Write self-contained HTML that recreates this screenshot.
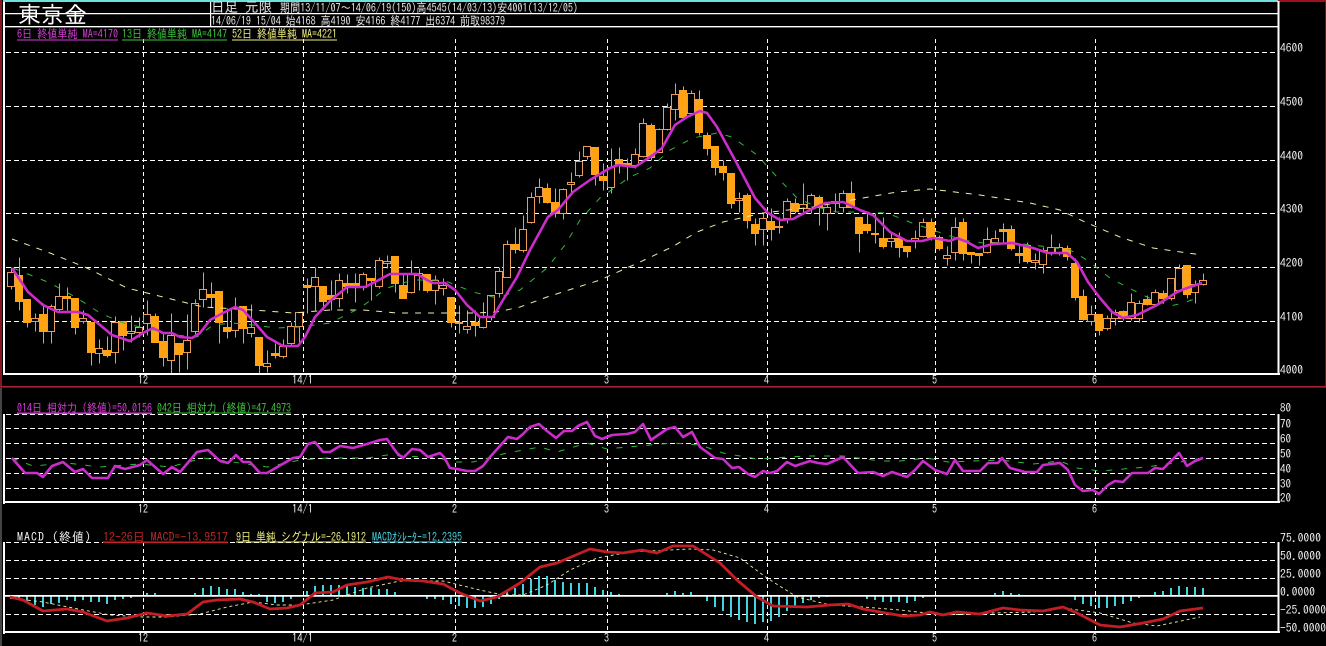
<!DOCTYPE html>
<html lang="ja"><head><meta charset="utf-8"><title>東京金</title>
<style>
html,body{margin:0;padding:0;background:#000;width:1326px;height:646px;overflow:hidden}
svg{display:block}
text{font-family:"IPAGothic","Noto Sans CJK JP",sans-serif;white-space:pre}
</style></head><body>
<svg width="1326" height="646" viewBox="0 0 1326 646" xmlns="http://www.w3.org/2000/svg">
<rect width="1326" height="646" fill="#000"/>
<!-- outer chrome -->
<path d="M0 0h2v386H0z" fill="#8a1420"/>
<path d="M0 388h2v258H0z" fill="#444"/>
<path d="M1325 0h1v386h-1z" fill="#7a1018"/>
<path d="M1278 0h48v2h-48z" fill="#a01018"/>
<path d="M3 0h1275v2H3z" fill="#6fe0e0"/>
<path d="M0 386h1326v1.6H0z" fill="#a82030"/>

<!-- grid main -->
<g fill="none" stroke="#fff" stroke-width="1" transform="translate(0,.5)">
<path stroke-dasharray="5 3" d="M6 52H1277M6 106H1277M6 160H1277M6 213H1277M6 267H1277M6 321H1277"/>
<path stroke-dasharray="5 3" d="M6 414H1277M6 428H1277M6 443H1277M6 458H1277M6 473H1277M6 488H1277"/>
<path stroke-dasharray="5 3" d="M6 542H1277M6 560H1277M6 578H1277M6 614H1277"/>
</g>
<g fill="none" stroke="#fff" stroke-width="1" stroke-dasharray="4 3" transform="translate(.5,0)">
<path d="M143 39V373M303 39V373M455 39V373M607 39V373M767 39V373M935 39V373M1095 39V373"/>
<path d="M143 414V501M303 414V501M455 414V501M607 414V501M767 414V501M935 414V501M1095 414V501"/>
<path d="M143 542V631M303 542V631M455 542V631M607 542V631M767 542V631M935 542V631M1095 542V631"/>
</g>

<!-- candles -->
<g transform="translate(.5,.5)">
<path fill="none" stroke="#e89c58" stroke-width="1" d="M11 267V289M35 313V331M51 304V343M59 283V312M83 310V323M99 339V363M115 316V363M131 315V342M139 317V337M147 300V335M171 313V374M187 314V369M195 299V335M203 272V307M235 297V337M251 304V337M267 350V372M283 339V358M291 322V345M299 312V343M315 267V310M339 273V307M363 272V290M379 257V288M387 255V268M411 260V293M419 268V290M435 275V304M443 278V295M459 305V333M467 310V333M483 302V328M491 295V320M499 267V297M507 240V277M523 215V252M531 192V223M539 178V203M563 188V219M571 172V195M579 151V177M587 146V159M611 148V193M635 148V168M643 118V157M659 128V152M667 103V130M675 83V120M691 90V115M739 192V212M763 213V245M779 217V233M787 198V223M803 183V213M811 193V213M827 203V230M843 190V212M891 232V247M915 230V248M923 218V237M947 246V265M955 217V260M987 227V253M995 230V243M1035 253V269M1043 247V273M1051 234V255M1059 243V255M1091 305V325M1107 315V330M1115 309V325M1131 293V320M1139 300V322M1155 289V305M1171 278V300M1179 264V292M1195 280V303M1203 273V285M19 257V310M27 299V327M43 303V343M67 287V310M75 298V334M91 322V365M107 336V357M123 321V350M155 313V342M163 333V366M179 343V372M211 282V307M219 291V343M227 308V338M243 306V343M259 337V373M275 343V358M307 278V313M323 286V310M331 280V310M347 274V293M355 273V302M371 278V300M395 256V292M403 273V298M427 274V292M451 297V327M475 310V336M515 227V253M547 183V203M555 188V217M595 147V185M603 163V190M619 147V173M627 158V180M651 123V160M683 86V118M699 90V135M707 132V155M715 146V175M723 160V180M731 173V208M747 193V228M755 218V245M771 208V240M795 198V213M819 195V225M835 193V212M851 181V208M859 217V252M867 212V233M875 213V243M883 217V248M899 232V257M907 246V257M931 218V240M939 235V250M963 218V260M971 252V263M979 253V265M1003 223V243M1011 225V250M1019 243V263M1027 242V263M1067 245V260M1075 258V300M1083 289V320M1099 314V335M1123 310V320M1147 295V305M1163 290V303M1187 265V298"/>
<path fill="#000" stroke="#e89c58" stroke-width="1" d="M7 272h7v14h-7zM31 318h7v3h-7zM47 306h7v25h-7zM55 296h7v13h-7zM79 318h7v3h-7zM95 348h7v5h-7zM111 322h7v30h-7zM127 331h7v2h-7zM135 327h7v5h-7zM143 314h7v9h-7zM167 335h7v25h-7zM183 340h7v12h-7zM191 303h7v28h-7zM199 289h7v10h-7zM231 308h7v22h-7zM247 327h7v6h-7zM263 363h7v3h-7zM279 346h7v10h-7zM287 326h7v17h-7zM295 312h7v14h-7zM311 277h7v9h-7zM335 280h7v18h-7zM359 274h7v13h-7zM375 260h7v26h-7zM383 261h7v2h-7zM407 273h7v19h-7zM415 273h7v2h-7zM431 280h7v10h-7zM439 285h7v3h-7zM455 322h7v1h-7zM463 326h7v3h-7zM479 317h7v10h-7zM487 295h7v22h-7zM495 271h7v22h-7zM503 244h7v33h-7zM519 229h7v21h-7zM527 197h7v25h-7zM535 187h7v9h-7zM559 189h7v24h-7zM567 182h7v2h-7zM575 161h7v14h-7zM583 146h7v10h-7zM607 167h7v20h-7zM631 154h7v11h-7zM639 123h7v33h-7zM655 129h7v23h-7zM663 107h7v22h-7zM671 94h7v15h-7zM687 93h7v20h-7zM735 198h7v2h-7zM759 218h7v11h-7zM775 226h7v1h-7zM783 201h7v17h-7zM799 204h7v4h-7zM807 195h7v13h-7zM823 207h7v6h-7zM839 193h7v14h-7zM887 238h7v3h-7zM911 238h7v3h-7zM919 222h7v14h-7zM943 255h7v3h-7zM951 227h7v25h-7zM983 239h7v13h-7zM991 238h7v4h-7zM1031 260h7v2h-7zM1039 250h7v14h-7zM1047 247h7v6h-7zM1055 247h7v6h-7zM1087 314h7v7h-7zM1103 318h7v10h-7zM1111 312h7v6h-7zM1127 302h7v16h-7zM1135 303h7v15h-7zM1151 292h7v12h-7zM1167 278h7v20h-7zM1175 268h7v22h-7zM1191 284h7v8h-7zM1199 280h7v4h-7z"/>
<path fill="#ffa214" stroke="#ffa214" stroke-width="1" d="M15 275h7v26h-7zM23 299h7v23h-7zM39 314h7v17h-7zM63 296h7v2h-7zM71 298h7v29h-7zM87 322h7v30h-7zM103 350h7v5h-7zM119 321h7v14h-7zM151 316h7v26h-7zM159 341h7v16h-7zM175 343h7v11h-7zM207 294h7v3h-7zM215 291h7v31h-7zM223 327h7v4h-7zM239 306h7v22h-7zM255 337h7v28h-7zM271 353h7v2h-7zM303 285h7v2h-7zM319 286h7v15h-7zM327 295h7v4h-7zM343 283h7v3h-7zM351 283h7v4h-7zM367 278h7v2h-7zM391 256h7v27h-7zM399 285h7v13h-7zM423 274h7v16h-7zM447 297h7v25h-7zM471 322h7v3h-7zM511 244h7v5h-7zM543 188h7v14h-7zM551 202h7v11h-7zM591 147h7v27h-7zM599 176h7v4h-7zM615 159h7v6h-7zM623 163h7v2h-7zM647 125h7v32h-7zM679 90h7v27h-7zM695 99h7v33h-7zM703 135h7v13h-7zM711 146h7v21h-7zM719 166h7v6h-7zM727 173h7v30h-7zM743 195h7v25h-7zM751 224h7v9h-7zM767 221h7v8h-7zM791 203h7v8h-7zM815 197h7v10h-7zM831 201h7v2h-7zM847 193h7v14h-7zM855 217h7v16h-7zM863 224h7v6h-7zM871 233h7v1h-7zM879 238h7v8h-7zM895 238h7v9h-7zM903 246h7v5h-7zM927 222h7v15h-7zM935 237h7v11h-7zM959 222h7v31h-7zM967 252h7v2h-7zM975 253h7v2h-7zM999 229h7v2h-7zM1007 229h7v19h-7zM1015 253h7v2h-7zM1023 245h7v16h-7zM1063 248h7v8h-7zM1071 263h7v34h-7zM1079 296h7v23h-7zM1095 314h7v16h-7zM1119 311h7v7h-7zM1143 299h7v5h-7zM1159 293h7v5h-7zM1183 265h7v29h-7z"/>
</g>

<!-- moving averages -->
<polyline fill="none" stroke="#efefa8" stroke-width="1" stroke-dasharray="6 7" points="12,239 50,253 87,268 127,288 167,298 203,307 253,310 293,313 330,310 363,310 397,313 437,313 473,313 497,312 520,307 547,297 600,280 640,262 672,247 697,232 723,222 763,213 813,207 863,198 897,192 930,189 980,195 1030,203 1060,210 1085,222 1120,237 1153,248 1202,255"/>
<polyline fill="none" stroke="#2fb83a" stroke-width="1" stroke-dasharray="6 9" points="13,268 50,283 77,298 100,313 123,323 153,330 173,335 197,337 213,325 233,323 253,325 277,328 300,327 330,323 360,308 387,288 413,280 443,280 473,292 497,298 520,290 547,268 565,245 580,220 600,198 630,177 650,168 670,150 693,138 717,133 732,137 757,155 777,177 797,198 817,207 837,212 863,212 887,213 912,223 927,228 947,235 963,240 983,243 1010,242 1030,245 1050,247 1070,250 1087,260 1110,278 1127,287 1147,297 1170,306 1183,303 1200,297"/>
<polyline fill="none" stroke="#cc2ccc" stroke-width="2.6" stroke-linejoin="round" points="12,268 20,280 28,292 43,305 58,312 78,312 88,315 100,325 112,335 130,341 143,333 153,328 163,333 172,333 180,337 192,338 200,333 210,320 223,313 235,307 243,310 255,323 267,337 283,346 298,346 305,337 315,317 330,301 347,287 365,287 375,282 390,274 417,274 427,280 433,283 445,283 455,290 467,305 480,317 493,317 503,300 517,277 530,250 548,217 558,210 573,192 590,180 610,168 618,165 635,167 653,155 662,148 675,125 687,117 700,111 707,113 717,127 735,160 755,198 768,213 780,220 793,219 810,210 825,203 843,202 860,210 873,215 890,232 907,241 922,241 933,238 950,241 957,238 967,242 978,248 993,244 1013,243 1033,248 1048,253 1067,253 1077,262 1088,282 1100,298 1112,312 1123,318 1137,315 1157,305 1177,292 1187,288 1202,283"/>

<!-- RSI -->
<polyline fill="none" stroke="#2fb83a" stroke-width="1" stroke-dasharray="6 9" points="12,458 33,466 67,463 100,467 140,464 170,467 203,458 233,462 267,467 300,460 327,458 367,458 387,455 440,458 450,462 473,462 507,453 540,447 557,452 587,443 607,449 627,447 673,443 700,445 723,453 757,459 807,456 843,456 880,461 900,461 927,458 948,462 1000,460 1033,464 1060,461 1077,468 1100,471 1147,467 1180,462 1203,458"/>
<polyline fill="none" stroke="#cc2ccc" stroke-width="2.6" stroke-linejoin="round" points="12,458 25,473 37,473 43,477 52,466 63,462 75,472 83,469 92,478 108,478 115,466 125,469 140,465 147,460 163,474 172,467 180,472 197,452 208,450 220,461 228,463 236,455 243,462 250,462 260,473 267,473 293,458 300,457 308,444 315,442 323,452 330,452 340,446 353,448 367,444 380,440 387,439 397,453 403,458 412,449 420,450 428,457 440,453 444,457 450,468 457,469 467,471 475,471 483,466 490,457 508,437 517,439 523,434 530,427 539,424 547,431 556,438 564,431 572,431 578,426 587,422 595,436 602,439 612,435 627,434 635,432 643,424 651,440 667,429 675,427 683,437 692,432 700,447 715,458 723,459 732,468 739,467 748,474 755,477 763,471 770,473 777,471 787,462 795,466 810,461 818,463 827,464 843,457 858,473 873,472 883,476 892,472 907,477 915,470 923,461 935,470 947,474 955,460 963,471 980,471 988,463 998,463 1002,458 1010,468 1025,472 1037,472 1043,465 1060,463 1068,470 1075,485 1083,491 1093,490 1099,494 1108,485 1115,481 1123,482 1132,473 1148,473 1155,468 1163,469 1179,453 1187,466 1195,461 1203,458"/>

<!-- MACD histogram -->
<path fill="none" stroke="#3fd4e0" stroke-width="2" d="M11 595V599M19 595V599M27 596V602M35 596V605M43 596V607M51 596V604M59 596V603M67 595V600M75 596V601M83 596V600M91 596V602M99 596V602M107 596V604M115 596V600M123 596V599M131 596V598M147 593V596M155 593V596M163 595V596M171 595V596M187 595V596M195 593V596M203 588V596M211 586V596M219 587V596M227 589V596M235 589V596M243 592V596M251 594V596M259 594V596M267 596V602M275 596V603M283 596V602M291 596V599M307 591V596M315 586V596M323 585V596M331 585V596M339 585V596M347 586V596M355 587V596M363 588V596M371 588V596M379 589V596M387 589V596M395 592V596M427 595V599M435 595V599M443 596V600M451 596V604M459 596V606M467 596V608M475 596V608M483 596V607M491 596V604M499 594V599M507 592V596M515 588V596M523 584V596M531 579V596M539 576V596M547 576V596M555 580V596M563 582V596M571 583V596M579 583V596M587 583V596M595 587V596M603 590V596M611 592V596M619 594V596M635 595V596M643 595V596M651 595V596M667 593V596M675 591V596M683 593V596M691 592V596M707 596V601M715 596V607M723 596V611M731 596V617M739 596V620M747 596V622M755 596V624M763 596V622M771 596V621M779 596V617M787 596V611M795 596V607M803 596V603M811 596V600M819 596V598M827 596V597M843 595V596M851 595V596M859 595V596M867 596V599M875 596V600M883 596V602M891 596V602M899 596V602M907 596V603M915 596V601M923 596V598M947 595V596M955 595V596M963 595V596M979 595V596M987 595V596M995 593V596M1003 591V596M1011 593V596M1019 594V596M1027 595V596M1059 595V596M1067 595V596M1075 596V600M1083 596V604M1091 596V606M1099 596V608M1107 596V608M1115 596V606M1123 596V604M1131 596V601M1139 596V598M1147 595V596M1155 592V596M1163 591V596M1171 588V596M1179 586V596M1187 587V596M1195 587V596M1203 588V596"/>
<path d="M5 595h1273v1.8H5z" fill="#fff"/>
<polyline fill="none" stroke="#efefa8" stroke-width=".9" stroke-dasharray="3 3" points="10,598 43,602 73,608 110,615 143,617 167,617 200,614 227,607 253,602 277,605 300,605 333,600 367,588 400,581 443,581 480,590 503,595 523,595 547,585 570,570 597,558 630,552 690,549 713,550 740,558 767,578 797,597 830,605 863,607 900,610 927,613 943,615 993,613 1033,612 1063,608 1100,613 1133,623 1157,626 1200,617"/>
<polyline fill="none" stroke="#c41e24" stroke-width="2.8" stroke-linejoin="round" points="10,597 23,600 43,611 67,609 83,612 107,621 127,618 147,613 167,616 187,614 203,602 217,600 240,599 253,602 270,609 287,608 300,605 315,593 333,592 347,585 367,582 388,577 403,580 423,581 443,584 460,593 480,601 497,597 520,583 540,567 557,563 590,549 607,552 623,553 642,550 657,553 673,546 693,546 720,563 737,580 757,597 773,606 807,607 830,605 848,604 863,609 880,612 903,616 920,615 930,612 943,615 957,612 980,614 1003,608 1020,610 1043,611 1063,607 1077,613 1100,625 1120,627 1143,623 1163,619 1180,611 1203,608"/>

<!-- frames -->
<g fill="#fff">
<path d="M3 2h2v373H3zM5 373h1275v2H5zM1277.5 1h2v374h-2z"/>
<path d="M5 13h1273v1.2H5zM5 26h1273v1.4H5zM210 2h1.2v24H210z"/>
<path d="M3 414h2v90H3zM5 501h1275v2H5zM1277.5 414h2v89h-2z"/>
<path d="M3 542h2v92H3zM5 631h1275v2H5zM1277.5 542h2v91h-2z"/>
</g>

<!-- header -->
<text x="18" y="23" font-size="23" fill="#fff" textLength="69" lengthAdjust="spacing">東京金</text>
<text x="211" y="12" font-size="14" fill="#e8e8e8" textLength="61" lengthAdjust="spacingAndGlyphs">日足 元限</text>
<text x="280" y="12" font-size="12" fill="#e8e8e8" textLength="298" lengthAdjust="spacingAndGlyphs">期間13/11/07～14/06/19(150)高4545(14/03/13)安4001(13/12/05)</text>
<text x="211" y="25" font-size="12" fill="#e8e8e8" textLength="294" lengthAdjust="spacingAndGlyphs">14/06/19 15/04 始4168 高4190 安4166 終4177 出6374 前取98379</text>

<!-- main legend -->
<g font-size="12">
<text x="17" y="38" fill="#d83cd8" textLength="101" lengthAdjust="spacingAndGlyphs">6日 終値単純 MA=4170</text>
<text x="122" y="38" fill="#3cc43c" textLength="105" lengthAdjust="spacingAndGlyphs">13日 終値単純 MA=4147</text>
<text x="232" y="38" fill="#f0f080" textLength="105" lengthAdjust="spacingAndGlyphs">52日 終値単純 MA=4221</text>
<text x="17" y="412" fill="#d83cd8" textLength="135" lengthAdjust="spacingAndGlyphs">014日 相対力 (終値)=50.0156</text>
<text x="157" y="412" fill="#3cc43c" textLength="134" lengthAdjust="spacingAndGlyphs">042日 相対力 (終値)=47.4973</text>
<text x="17" y="541" fill="#eee" textLength="74" lengthAdjust="spacing">MACD (終値)</text>
<text x="103" y="541" fill="#c02428" textLength="125" lengthAdjust="spacing">12-26日 MACD=-13.9517</text>
<text x="236" y="541" fill="#f0f080" textLength="130" lengthAdjust="spacingAndGlyphs">9日 単純 シグナル=-26.1912</text>
<text x="372" y="541" fill="#45d0e0" textLength="90" lengthAdjust="spacingAndGlyphs">MACDｵｼﾚｰﾀｰ=12.2395</text>
</g>
<path d="M17 39.5h101v1H17z" fill="#d83cd8"/>
<path d="M122 39.5h105v1H122z" fill="#3cc43c"/>
<path d="M232 39.5h105v1H232z" fill="#f0f080"/>
<path d="M17 412.5h135v1.6H17z" fill="#d83cd8"/>
<path d="M157 412.5h134v1H157z" fill="#3cc43c"/>
<path d="M103 541.5h125v1.6H103z" fill="#c02428"/>
<path d="M236 541.5h130v1H236z" fill="#f0f080"/>
<path d="M372 541.5h90v1H372z" fill="#45d0e0"/>

<!-- y axis labels -->
<g font-size="12" fill="#f0f0f0">
<text x="1280" y="52" textLength="23" lengthAdjust="spacingAndGlyphs">4600</text>
<text x="1280" y="106" textLength="23" lengthAdjust="spacingAndGlyphs">4500</text>
<text x="1280" y="160" textLength="23" lengthAdjust="spacingAndGlyphs">4400</text>
<text x="1280" y="213" textLength="23" lengthAdjust="spacingAndGlyphs">4300</text>
<text x="1280" y="267" textLength="23" lengthAdjust="spacingAndGlyphs">4200</text>
<text x="1280" y="321" textLength="23" lengthAdjust="spacingAndGlyphs">4100</text>
<text x="1280" y="374" textLength="23" lengthAdjust="spacingAndGlyphs">4000</text>
<text x="1280" y="412" textLength="11" lengthAdjust="spacingAndGlyphs">80</text>
<text x="1280" y="428" textLength="11" lengthAdjust="spacingAndGlyphs">70</text>
<text x="1280" y="443" textLength="11" lengthAdjust="spacingAndGlyphs">60</text>
<text x="1280" y="458" textLength="11" lengthAdjust="spacingAndGlyphs">50</text>
<text x="1280" y="473" textLength="11" lengthAdjust="spacingAndGlyphs">40</text>
<text x="1280" y="488" textLength="11" lengthAdjust="spacingAndGlyphs">30</text>
<text x="1280" y="502" textLength="11" lengthAdjust="spacingAndGlyphs">20</text>
<text x="1280" y="542" textLength="41" lengthAdjust="spacingAndGlyphs">75.0000</text>
<text x="1280" y="560" textLength="41" lengthAdjust="spacingAndGlyphs">50.0000</text>
<text x="1280" y="578" textLength="41" lengthAdjust="spacingAndGlyphs">25.0000</text>
<text x="1280" y="596" textLength="35" lengthAdjust="spacingAndGlyphs">0.0000</text>
<text x="1280" y="614" textLength="46" lengthAdjust="spacingAndGlyphs">-25.0000</text>
<text x="1280" y="632" textLength="46" lengthAdjust="spacingAndGlyphs">-50.0000</text>
</g>

<!-- x axis labels -->
<g font-size="12" fill="#f0f0f0">
<text x="138" y="384" textLength="10" lengthAdjust="spacingAndGlyphs">12</text>
<text x="292" y="384" textLength="21" lengthAdjust="spacingAndGlyphs">14/1</text>
<text x="452" y="384" textLength="5" lengthAdjust="spacingAndGlyphs">2</text>
<text x="604" y="384" textLength="5" lengthAdjust="spacingAndGlyphs">3</text>
<text x="764" y="384" textLength="5" lengthAdjust="spacingAndGlyphs">4</text>
<text x="932" y="384" textLength="5" lengthAdjust="spacingAndGlyphs">5</text>
<text x="1092" y="384" textLength="5" lengthAdjust="spacingAndGlyphs">6</text>
<text x="138" y="513" textLength="10" lengthAdjust="spacingAndGlyphs">12</text>
<text x="292" y="513" textLength="21" lengthAdjust="spacingAndGlyphs">14/1</text>
<text x="452" y="513" textLength="5" lengthAdjust="spacingAndGlyphs">2</text>
<text x="604" y="513" textLength="5" lengthAdjust="spacingAndGlyphs">3</text>
<text x="764" y="513" textLength="5" lengthAdjust="spacingAndGlyphs">4</text>
<text x="932" y="513" textLength="5" lengthAdjust="spacingAndGlyphs">5</text>
<text x="1092" y="513" textLength="5" lengthAdjust="spacingAndGlyphs">6</text>
<text x="138" y="642" textLength="10" lengthAdjust="spacingAndGlyphs">12</text>
<text x="292" y="642" textLength="21" lengthAdjust="spacingAndGlyphs">14/1</text>
<text x="452" y="642" textLength="5" lengthAdjust="spacingAndGlyphs">2</text>
<text x="604" y="642" textLength="5" lengthAdjust="spacingAndGlyphs">3</text>
<text x="764" y="642" textLength="5" lengthAdjust="spacingAndGlyphs">4</text>
<text x="932" y="642" textLength="5" lengthAdjust="spacingAndGlyphs">5</text>
<text x="1092" y="642" textLength="5" lengthAdjust="spacingAndGlyphs">6</text>
</g>
</svg>
</body></html>
